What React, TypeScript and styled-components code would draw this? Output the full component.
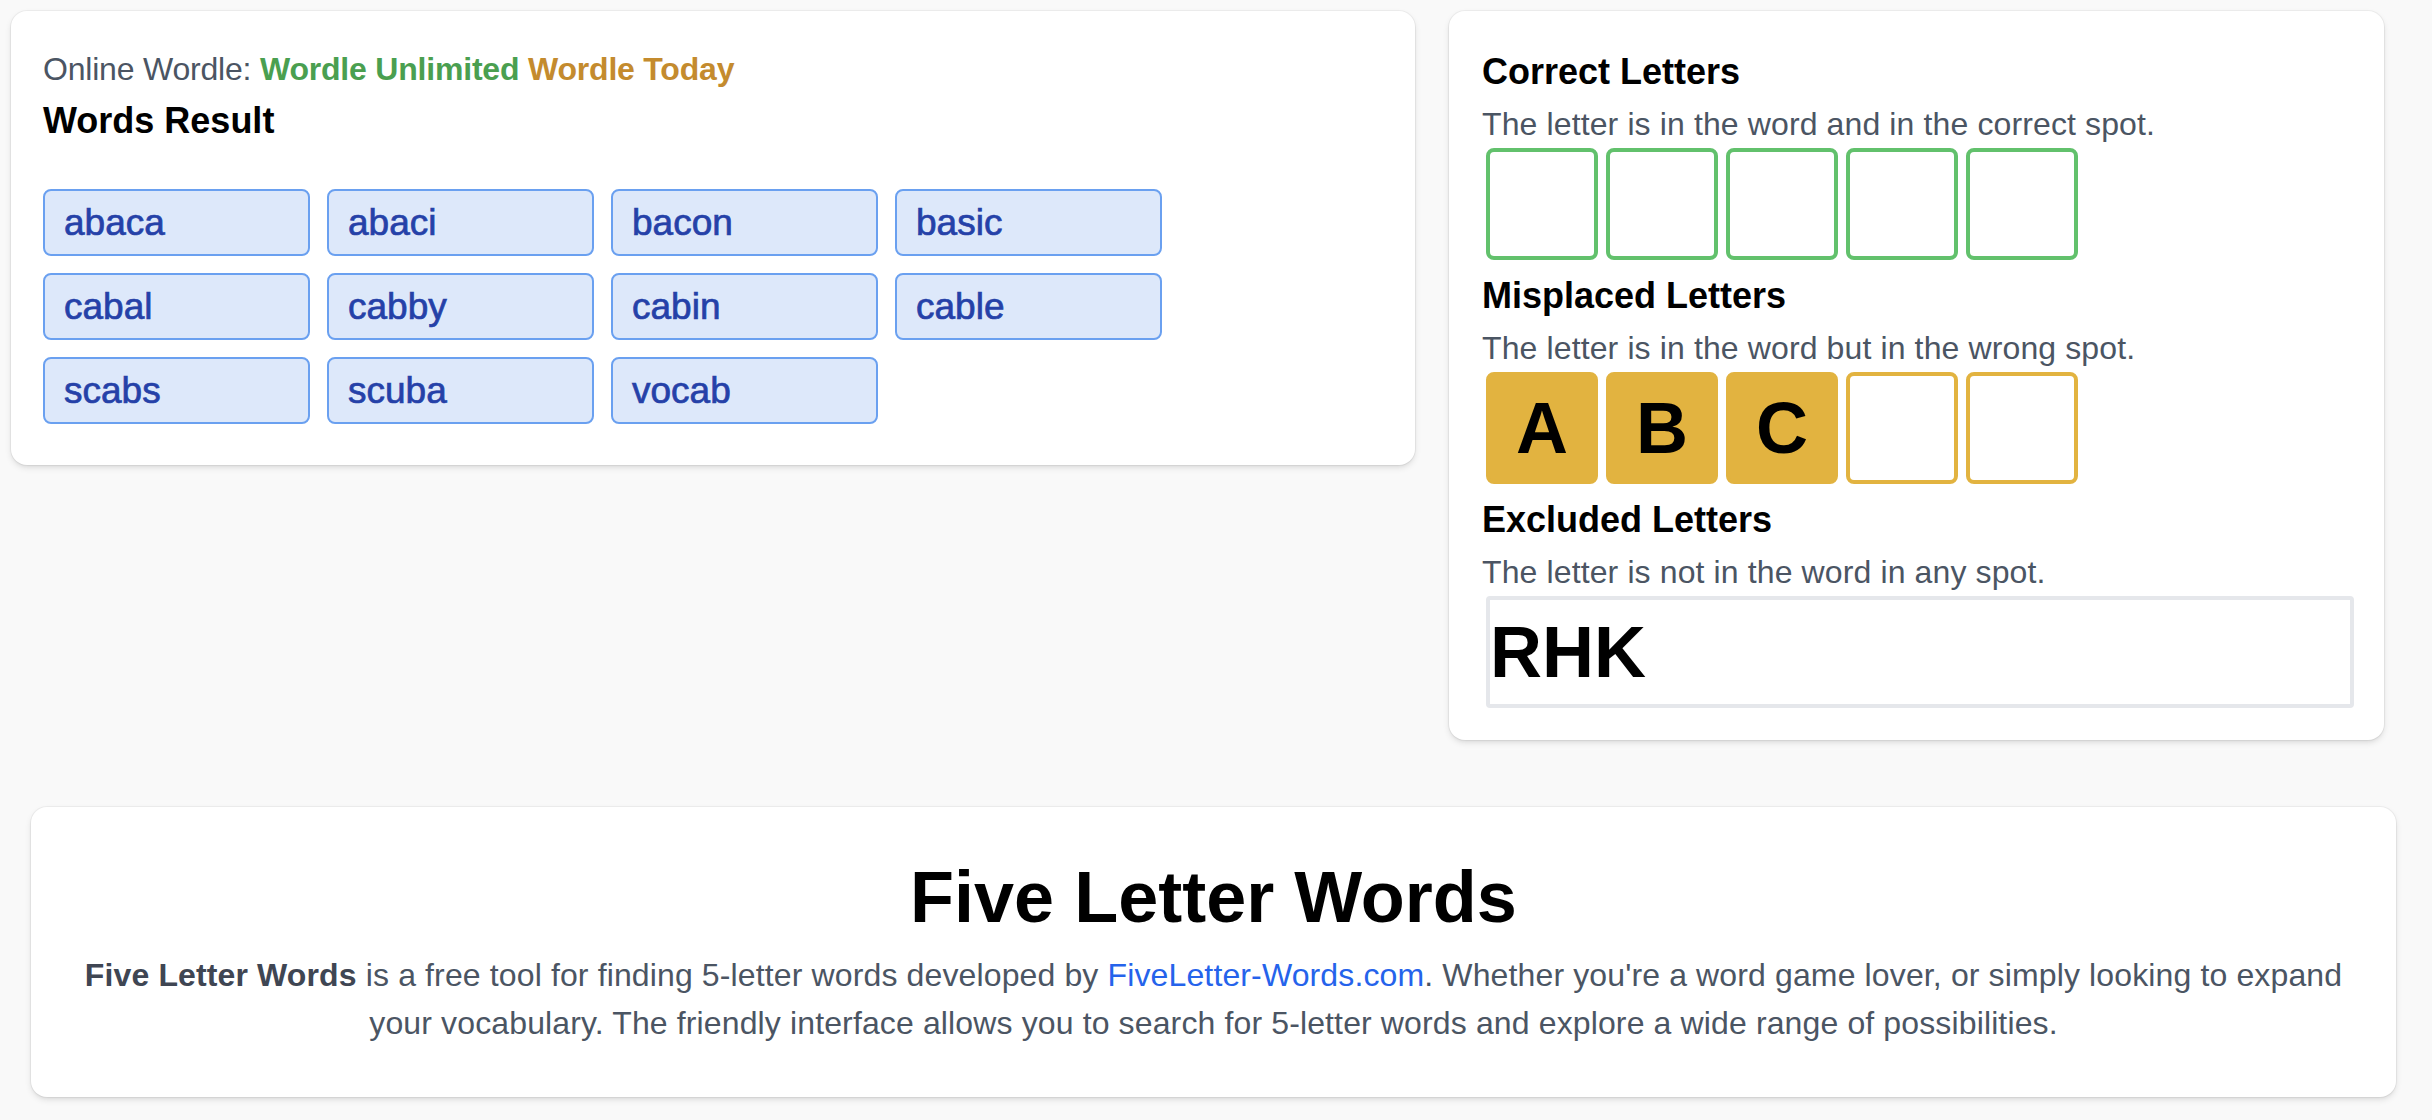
import React from "react";
import styled, { createGlobalStyle } from "styled-components";

const GlobalStyle = createGlobalStyle`
  html, body {
    margin: 0;
    padding: 0;
    background: #f9f9f9;
    font-family: "Liberation Sans", Arial, Helvetica, sans-serif;
    color: #000;
  }
  #root { min-height: 1120px; }
  * { box-sizing: border-box; }
`;

const Page = styled.div`
  padding-top: 11px;
`;

const TopRow = styled.div`
  display: flex;
  align-items: flex-start;
  gap: 34px;
  padding-left: 11px;
`;

const Card = styled.section<{ $w: number }>`
  width: ${(p) => p.$w}px;
  flex: none;
  background: #fff;
  border-radius: 16px;
  box-shadow: 0 0 0 1px rgba(0, 0, 0, 0.045), 0 3px 6px rgba(0, 0, 0, 0.1),
    0 2px 4px -2px rgba(0, 0, 0, 0.08);
`;

const ResultsCard = styled(Card)`
  padding: 34px 32px 41px 32px;
`;

const FilterCard = styled(Card)`
  padding: 33px 32px 32px 33px;
`;

const Intro = styled.div`
  font-size: 32px;
  line-height: 48px;
  letter-spacing: -0.2px;
  color: #4b5563;
`;

const IntroLink = styled.a<{ $c: string }>`
  color: ${(p) => p.$c};
  font-weight: 700;
  text-decoration: none;
`;

const SectionTitle = styled.h2`
  margin: 0;
  font-size: 36px;
  line-height: 56px;
  font-weight: 700;
  color: #000;
`;

const WordGrid = styled.div`
  margin-top: 40px;
  display: grid;
  grid-template-columns: repeat(4, 267px);
  column-gap: 17px;
  row-gap: 17px;
`;

const WordChip = styled.a`
  display: flex;
  align-items: center;
  height: 67px;
  padding-left: 19px;
  background: #dde8fa;
  border: 2px solid #6aa0f0;
  border-radius: 8px;
  color: #2541a8;
  font-size: 37px;
  font-weight: 500;
  -webkit-text-stroke: 0.7px #2541a8;
  text-decoration: none;
`;

const Desc = styled.p`
  margin: 0;
  font-size: 32px;
  line-height: 48px;
  letter-spacing: 0.12px;
  color: #4b5563;
`;

const TileRow = styled.div`
  display: flex;
  gap: 8px;
  padding-left: 4px;
  margin-bottom: 8px;
`;

const Tile = styled.div<{ $color: string; $filled: boolean }>`
  width: 112px;
  height: 112px;
  border: 4px solid ${(p) => p.$color};
  background: ${(p) => (p.$filled ? p.$color : "#fff")};
  border-radius: 8px;
  display: flex;
  align-items: center;
  justify-content: center;
  font-size: 72px;
  font-weight: 700;
  color: #000;
`;

const ExcludedInput = styled.input`
  display: block;
  width: 868px;
  height: 112px;
  margin-left: 4px;
  padding: 0;
  border: 4px solid #e5e7eb;
  border-radius: 4px;
  font-family: "Liberation Sans", Arial, sans-serif;
  font-size: 72px;
  font-weight: 700;
  color: #000;
  background: #fff;
  outline: none;
`;

const AboutCard = styled(Card)`
  margin: 67px 0 0 31px;
  padding: 50px 48px 50px 48px;
  text-align: center;
`;

const AboutTitle = styled.h1`
  margin: 0 0 14px 0;
  font-size: 72px;
  line-height: 80px;
  font-weight: 700;
  color: #000;
`;

const AboutText = styled.p`
  margin: 0;
  font-size: 32px;
  line-height: 48px;
  letter-spacing: 0.13px;
  color: #4b5563;

  strong {
    font-weight: 700;
    color: #3f4653;
  }
`;

const SiteLink = styled.a`
  color: #2563eb;
  text-decoration: none;
`;

const words = [
  "abaca",
  "abaci",
  "bacon",
  "basic",
  "cabal",
  "cabby",
  "cabin",
  "cable",
  "scabs",
  "scuba",
  "vocab",
];

const GREEN = "#62c16c";
const YELLOW = "#e2b340";

const correct = ["", "", "", "", ""];
const misplaced = ["A", "B", "C", "", ""];

export default function App() {
  return (
    <Page>
      <GlobalStyle />
      <TopRow>
        <ResultsCard $w={1404}>
          <Intro>
            Online Wordle:{" "}
            <IntroLink $c="#4a9f50" href="#">
              Wordle Unlimited
            </IntroLink>{" "}
            <IntroLink $c="#c48b2e" href="#">
              Wordle Today
            </IntroLink>
          </Intro>
          <SectionTitle>Words Result</SectionTitle>
          <WordGrid>
            {words.map((w) => (
              <WordChip key={w} href="#">
                {w}
              </WordChip>
            ))}
          </WordGrid>
        </ResultsCard>

        <FilterCard $w={935}>
          <SectionTitle>Correct Letters</SectionTitle>
          <Desc>The letter is in the word and in the correct spot.</Desc>
          <TileRow>
            {correct.map((l, i) => (
              <Tile key={i} $color={GREEN} $filled={l !== ""}>
                {l}
              </Tile>
            ))}
          </TileRow>

          <SectionTitle>Misplaced Letters</SectionTitle>
          <Desc>The letter is in the word but in the wrong spot.</Desc>
          <TileRow>
            {misplaced.map((l, i) => (
              <Tile key={i} $color={YELLOW} $filled={l !== ""}>
                {l}
              </Tile>
            ))}
          </TileRow>

          <SectionTitle>Excluded Letters</SectionTitle>
          <Desc>The letter is not in the word in any spot.</Desc>
          <ExcludedInput value="RHK" readOnly />
        </FilterCard>
      </TopRow>

      <AboutCard $w={2365}>
        <AboutTitle>Five Letter Words</AboutTitle>
        <AboutText>
          <strong>Five Letter Words</strong> is a free tool for finding
          5-letter words developed by{" "}
          <SiteLink href="#">FiveLetter-Words.com</SiteLink>. Whether you're a
          word game lover, or simply looking to expand your vocabulary. The
          friendly interface allows you to search for 5-letter words and
          explore a wide range of possibilities.
        </AboutText>
      </AboutCard>
    </Page>
  );
}
